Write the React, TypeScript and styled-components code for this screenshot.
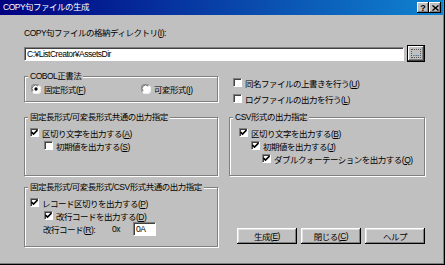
import React from 'react';
import styled, { createGlobalStyle } from 'styled-components';

const face = '#c0c0c0';

const GlobalStyle = createGlobalStyle`
  html, body {
    margin: 0;
    padding: 0;
    background: ${face};
  }
  body {
    font-family: "Liberation Sans", "Noto Sans CJK JP", sans-serif;
    font-size: 8.5px;
    letter-spacing: -0.5px;
    color: #000;
  }
  * {
    box-sizing: border-box;
  }
`;

const Window = styled.div`
  width: 445px;
  height: 265px;
  background: ${face};
  display: flex;
  flex-direction: column;
  padding: 0 2px 2px 0;
  box-shadow: inset -1px -1px 0 #000, inset -2px -2px 0 #808080;
`;

const TitleBar = styled.div`
  height: 15px;
  flex: none;
  display: flex;
  align-items: center;
  padding: 0 2px 0 3px;
  background: linear-gradient(to right, #000080, #1084d0);
  color: #fff;
`;

const TitleText = styled.span`
  flex: 1;
  line-height: 15px;
`;

const CaptionButton = styled.span`
  width: 12px;
  height: 11px;
  display: flex;
  align-items: center;
  justify-content: center;
  background: ${face};
  color: #000;
  font-weight: bold;
  font-size: 9px;
  letter-spacing: 0;
  box-shadow: inset -1px -1px 0 #000, inset 1px 1px 0 #fff, inset -2px -2px 0 #808080;
`;

const Body = styled.div`
  flex: 1;
  padding: 13px 18px 0 24px;
  display: flex;
  flex-direction: column;
`;

const FieldLabel = styled.div`
  line-height: 11px;
  height: 11px;
`;

const PathRow = styled.div`
  margin-top: 6px;
  display: flex;
  align-items: center;
  gap: 3px;
  height: 17px;
`;

const TextBox = styled.div<{ $width?: number }>`
  height: 14px;
  ${p => (p.$width ? `width: ${p.$width}px;` : 'flex: 1;')}
  background: #fff;
  border-top: 1px solid #808080;
  border-left: 1px solid #808080;
  border-right: 1px solid #fff;
  border-bottom: 1px solid #fff;
  box-shadow: inset 1px 1px 0 #404040;
  padding: 0 0 0 2px;
  line-height: 12px;
  white-space: nowrap;
  overflow: hidden;
`;

const BrowseButton = styled.div`
  width: 18px;
  height: 17px;
  flex: none;
  background: ${face};
  border: 1px solid #000;
  box-shadow: inset -1px -1px 0 #404040, inset 1px 1px 0 #fff, inset -2px -2px 0 #808080;
  display: flex;
  align-items: center;
  justify-content: center;
  padding: 3px;
`;

const FocusRect = styled.div`
  width: 100%;
  height: 100%;
  border: 1px dotted #555;
  display: flex;
  align-items: flex-end;
  justify-content: center;
  line-height: 7px;
  font-size: 8px;
  letter-spacing: 0;
`;

const Columns = styled.div`
  margin-top: 9px;
  display: grid;
  grid-template-columns: 194px 196px;
  grid-template-rows: 41px 70px 65px;
  column-gap: 11px;
`;

const GroupBox = styled.fieldset<{ $height: number }>`
  margin: 0;
  padding: 0;
  min-width: 0;
  height: ${p => p.$height}px;
  border: 1px solid #808080;
  box-shadow: 1px 1px 0 #fff, inset 1px 1px 0 #fff;
`;

const GroupTitle = styled.legend`
  margin-left: 3px;
  padding: 0 2px;
  line-height: 11px;
  background: ${face};
`;

const GroupBody = styled.div<{ $pt: number; $pl: number }>`
  padding: ${p => p.$pt}px 0 0 ${p => p.$pl}px;
  display: flex;
  flex-direction: column;
`;

const RadioRow = styled.div`
  display: grid;
  grid-template-columns: 110px 1fr;
  height: 13px;
  align-items: center;
`;

const Option = styled.label<{ $indent?: number }>`
  display: flex;
  align-items: center;
  gap: 3px;
  height: 13px;
  padding-left: ${p => p.$indent ?? 0}px;
  white-space: nowrap;
`;

const Box = styled.span`
  width: 9px;
  height: 9px;
  flex: none;
  background: #fff;
  border-top: 1px solid #808080;
  border-left: 1px solid #808080;
  border-right: 1px solid #fff;
  border-bottom: 1px solid #fff;
  box-shadow: inset 1px 1px 0 #404040;
  display: flex;
  align-items: center;
  justify-content: center;
`;

const RightTop = styled.div`
  padding: 5px 0 0 4px;
  display: flex;
  flex-direction: column;
  gap: 3px;
`;

const HexRow = styled.div`
  display: flex;
  align-items: center;
  height: 14px;
  padding-left: 13px;
`;

const HexLabel = styled.span`
  width: 69px;
`;

const HexPrefix = styled.span`
  width: 21px;
`;

const ButtonBar = styled.div`
  align-self: end;
  justify-self: end;
  margin-bottom: 3px;
  display: flex;
  gap: 4px;
`;

const PushButton = styled.div`
  width: 60px;
  height: 16px;
  background: ${face};
  display: flex;
  align-items: center;
  justify-content: center;
  box-shadow: inset -1px -1px 0 #000, inset 1px 1px 0 #fff, inset -2px -2px 0 #808080, inset 2px 2px 0 #dfdfdf;
`;

const CheckBox: React.FC<{ checked?: boolean }> = ({ checked }) => (
  <Box>
    {checked && (
      <svg width="7" height="7" viewBox="0 0 7 7">
        <path d="M0.5 3 L2.5 5 L6.5 1" stroke="#000" strokeWidth="1.6" fill="none" />
      </svg>
    )}
  </Box>
);

const Radio: React.FC<{ checked?: boolean }> = ({ checked }) => (
  <svg width="10" height="10" viewBox="0 0 12 12" style={{ flex: 'none' }}>
    <circle cx="6" cy="6" r="5.5" fill="#fff" />
    <path d="M1.5 9.5 A5 5 0 0 1 9.5 1.5" stroke="#808080" strokeWidth="1.2" fill="none" />
    <path d="M2.5 8.5 A4 4 0 0 1 8.5 2.5" stroke="#404040" strokeWidth="1" fill="none" />
    <path d="M10.5 2.5 A5 5 0 0 1 2.5 10.5" stroke="#fff" strokeWidth="1.2" fill="none" />
    {checked && <circle cx="6" cy="6" r="2" fill="#000" />}
  </svg>
);

const Check: React.FC<{ checked?: boolean; indent?: number; children: React.ReactNode }> = ({
  checked,
  indent,
  children,
}) => (
  <Option $indent={indent}>
    <CheckBox checked={checked} />
    <span>{children}</span>
  </Option>
);

export default function App() {
  return (
    <>
      <GlobalStyle />
      <Window>
        <TitleBar>
          <TitleText>COPY句ファイルの生成</TitleText>
          <CaptionButton>?</CaptionButton>
          <CaptionButton>
            <svg width="7" height="6" viewBox="0 0 7 6">
              <path d="M0.5 0.5 L6.5 5.5 M6.5 0.5 L0.5 5.5" stroke="#000" strokeWidth="1.4" />
            </svg>
          </CaptionButton>
        </TitleBar>
        <Body>
          <FieldLabel>
            COPY句ファイルの格納ディレクトリ(<u>I</u>):
          </FieldLabel>
          <PathRow>
            <TextBox>C:¥ListCreator¥AssetsDir</TextBox>
            <BrowseButton>
              <FocusRect>...</FocusRect>
            </BrowseButton>
          </PathRow>
          <Columns>
            <GroupBox $height={31}>
              <GroupTitle>COBOL正書法</GroupTitle>
              <GroupBody $pt={0} $pl={6}>
                <RadioRow>
                  <Option>
                    <Radio checked />
                    <span>
                      固定形式(<u>F</u>)
                    </span>
                  </Option>
                  <Option>
                    <Radio />
                    <span>
                      可変形式(<u>I</u>)
                    </span>
                  </Option>
                </RadioRow>
              </GroupBody>
            </GroupBox>

            <RightTop>
              <Check>
                同名ファイルの上書きを行う(<u>U</u>)
              </Check>
              <Check>
                ログファイルの出力を行う(<u>L</u>)
              </Check>
            </RightTop>

            <GroupBox $height={64}>
              <GroupTitle>固定長形式/可変長形式共通の出力指定</GroupTitle>
              <GroupBody $pt={3} $pl={5}>
                <Check checked>
                  区切り文字を出力する(<u>A</u>)
                </Check>
                <Check indent={14}>
                  初期値を出力する(<u>S</u>)
                </Check>
              </GroupBody>
            </GroupBox>

            <GroupBox $height={64}>
              <GroupTitle>CSV形式の出力指定</GroupTitle>
              <GroupBody $pt={3} $pl={9}>
                <Check checked>
                  区切り文字を出力する(<u>B</u>)
                </Check>
                <Check checked indent={12}>
                  初期値を出力する(<u>J</u>)
                </Check>
                <Check checked indent={23}>
                  ダブルクォーテーションを出力する(<u>Q</u>)
                </Check>
              </GroupBody>
            </GroupBox>

            <GroupBox $height={65}>
              <GroupTitle>固定長形式/可変長形式/CSV形式共通の出力指定</GroupTitle>
              <GroupBody $pt={3} $pl={5}>
                <Check checked>
                  レコード区切りを出力する(<u>P</u>)
                </Check>
                <Check checked indent={14}>
                  改行コードを出力する(<u>D</u>)
                </Check>
                <HexRow>
                  <HexLabel>
                    改行コード(<u>R</u>):
                  </HexLabel>
                  <HexPrefix>0x</HexPrefix>
                  <TextBox $width={23}>0A</TextBox>
                </HexRow>
              </GroupBody>
            </GroupBox>

            <ButtonBar>
              <PushButton>
                生成(<u>E</u>)
              </PushButton>
              <PushButton>
                閉じる(<u>C</u>)
              </PushButton>
              <PushButton>ヘルプ</PushButton>
            </ButtonBar>
          </Columns>
        </Body>
      </Window>
    </>
  );
}
